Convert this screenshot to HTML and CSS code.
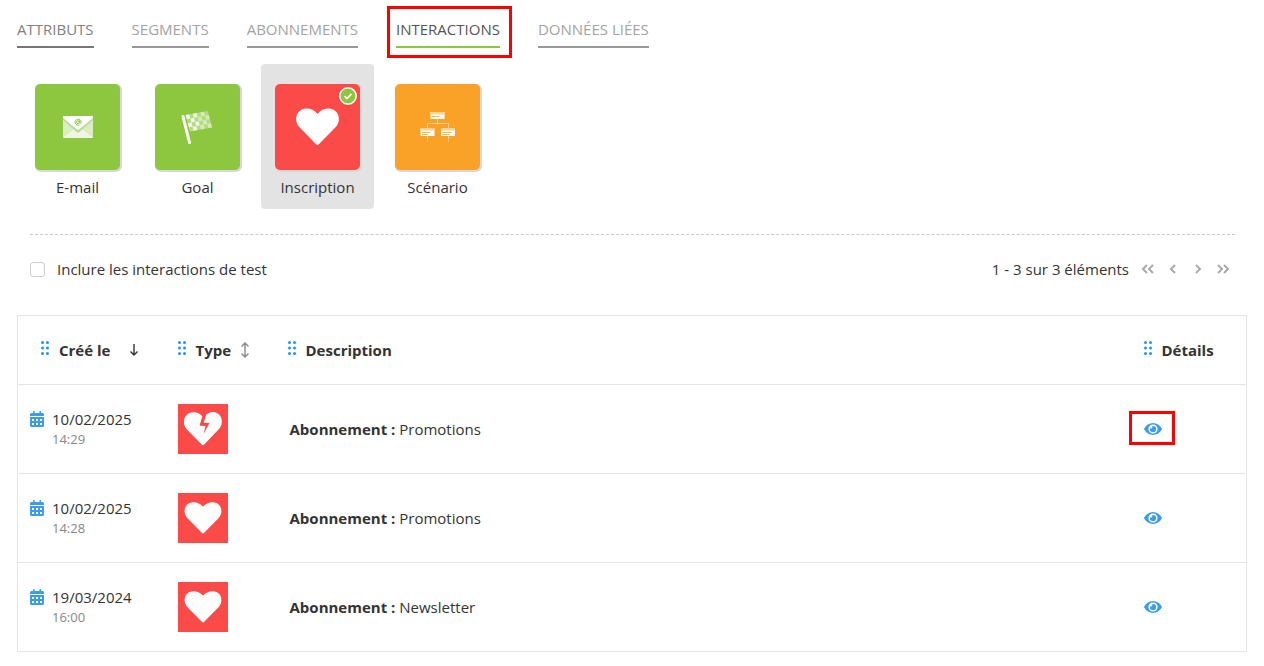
FILE: index.html
```html
<!DOCTYPE html>
<html lang="fr">
<head>
<meta charset="utf-8">
<meta name="viewport" content="width=device-width, initial-scale=1">
<title>Interactions</title>
<link rel="stylesheet" href="styles.css">
</head>
<body>
<svg class="defs" aria-hidden="true">
  <symbol id="heart" viewBox="0 0 44 38"><path d="M20.6 36.6 3.6 19.3C-1.6 13.8-.6 5.300 4.500 2 9.600-1.300 17.400-.2 22 5.600 26.600-.2 34.400-1.300 39.500 2c5.100 3.300 6.100 11.800.9 17.300l-17 17.300q-1.400 1.400-2.800 0z"/></symbol>
  <symbol id="broken" viewBox="0 0 38 34"><path d="M17.600 32.500 2.300 16.800C-2 12-.5 4.500 4.500 1.500 9-1 15 .2 18.300 4.200L15.500 13.800l6 .1-1.800 8.100 5.800-11-5.800-.2L22.300 2.600C26-.5 30.500-.8 34 1.700c5 3.500 5 10.600 1.200 15.100L20.200 32.500q-1.300 1.300-2.600 0z"/></symbol>
  <symbol id="eye" viewBox="0 0 18 12"><path fill-rule="evenodd" d="M.2 5.500C2 2.100 5.300 0 9 0s7 2.100 8.800 5.500q.3.500 0 1C16 9.900 12.700 12 9 12S2 9.900.2 6.500q-.3-.5 0-1zM9 1.400a4.600 4.600 0 1 0 0 9.200 4.600 4.600 0 0 0 0-9.200z"/><path d="M9 2.900A3.100 3.100 0 1 1 6 5.200 1.600 1.600 0 0 0 8.200 3z"/></symbol>
  <symbol id="calendar" viewBox="0 0 14 16"><path fill-rule="evenodd" d="M3 0h1.500v2h5V0H11v2h1.500Q14 2 14 3.500V5H0V3.500Q0 2 1.500 2H3zM0 6h14v8.500q0 1.500-1.500 1.500h-11Q0 16 0 14.500zm2 2v2h2V8zm4 0v2h2V8zm4 0v2h2V8zm-8 4v2h2v-2zm4 0v2h2v-2zm4 0v2h2v-2z"/></symbol>
  <symbol id="grip" viewBox="0 0 8 14"><circle cx="1.500" cy="1.500" r="1.500"/><circle cx="6.500" cy="1.500" r="1.500"/><circle cx="1.500" cy="7" r="1.500"/><circle cx="6.500" cy="7" r="1.500"/><circle cx="1.500" cy="12.500" r="1.500"/><circle cx="6.500" cy="12.500" r="1.500"/></symbol>
</svg>

<nav class="tabs">
  <a class="tab tab-dark" href="#attributs">ATTRIBUTS</a>
  <a class="tab" href="#segments">SEGMENTS</a>
  <a class="tab" href="#abonnements">ABONNEMENTS</a>
  <a class="tab tab-active" href="#interactions" aria-current="page">INTERACTIONS</a>
  <a class="tab" href="#donnees">DONNÉES LIÉES</a>
</nav>

<main>
  <div class="kinds">
    <button class="kind" type="button">
      <span class="tile green">
        <svg width="30" height="22" viewBox="0 0 30 22"><rect width="30" height="22" rx="1" fill="#dcedc2"/><path d="M0 22 11 13h8l11 9z" fill="#eff7e4"/><path d="M0 1v3l13.500 12q1.500 1.200 3 0L30 4V1z" fill="#bfd99a"/><path d="M0 1q0-1 1-1h28q1 0 1 1v1L16.500 13q-1.500 1.200-3 0L0 2z" fill="#fff"/><g fill="none" stroke="#8dc63f"><circle cx="15" cy="6.200" r="1.400"/><path d="M16.500 4.500v2.300q1.700 1.300 1.700-.8A3.100 3 0 1 0 16.600 8.900"/></g></svg>
      </span>
      <span>E-mail</span>
    </button>
    <button class="kind" type="button">
      <span class="tile green">
        <svg width="34" height="34" viewBox="0 0 34 34"><g fill="#fff" transform="matrix(3.7 -.67 1.1 4.1 4.500 5)"><path d="M0 0h6v4H0z" opacity=".35"/><path d="M0 0h1v1H0zM2 0h1v1H2zM1 1h1v1H1zM0 2h1v1H0zM2 2h1v1H2zM1 3h1v1H1z" opacity=".8"/><path d="M4 0h1v1H4zM3 1h1v1H3zM5 1h1v1H5zM4 2h1v1H4zM3 3h1v1H3zM5 3h1v1H5z" opacity=".45"/></g><path d="m2 6.500 6.500 26" stroke="#fff" stroke-width="3" stroke-linecap="round"/></svg>
      </span>
      <span>Goal</span>
    </button>
    <button class="kind kind-selected" type="button" aria-pressed="true">
      <span class="tile red">
        <svg class="heart" width="43" height="38"><use href="#heart"/></svg>
        <svg class="check" width="18" height="18" viewBox="0 0 18 18"><circle cx="9" cy="9" r="8.200" fill="#8dc63f" stroke="#fff" stroke-width="1.500"/><path d="m5.500 9.200 2.400 2.400 4.600-4.700" fill="none" stroke="#fff" stroke-width="1.700"/></svg>
      </span>
      <span>Inscription</span>
    </button>
    <button class="kind" type="button">
      <span class="tile orange">
        <svg width="36" height="32" viewBox="0 0 36 32"><g fill="none" stroke="#fff" opacity=".5"><path d="M17.500 8v6M7.500 17v-4.500h21V17"/><path d="M7.500 25v6M28.500 25v6" stroke-dasharray="3 1"/></g><g fill="#fff"><path d="M10.500 1h14v7h-14zM.5 17h14v8H.5zM21 17h14v8H21z"/></g><g fill="#fcd194"><path d="M10.500 1h14v2.500h-14zM.5 17h14v2.500H.5zM21 17h14v2.500H21z"/></g><path d="M12 5.500h7M2 21.500h8M2 23.500h6M22.500 21.500h9M22.500 23.500h7" stroke="#edc12b"/></svg>
      </span>
      <span>Scénario</span>
    </button>
  </div>

  <div class="toolbar">
    <label class="include"><input type="checkbox" class="box">Inclure les interactions de test</label>
    <div class="pager">
      <span>1 - 3 sur 3 éléments</span>
      <div class="pager-buttons">
        <button type="button" aria-label="Première page"><svg width="14" height="12" viewBox="0 0 14 12"><path d="M6 2 2 6l4 4M12 2 8 6l4 4"/></svg></button>
        <button type="button" aria-label="Page précédente"><svg width="14" height="12" viewBox="0 0 14 12"><path d="M9 2 5 6l4 4"/></svg></button>
        <button type="button" aria-label="Page suivante"><svg width="14" height="12" viewBox="0 0 14 12"><path d="m5 2 4 4-4 4"/></svg></button>
        <button type="button" aria-label="Dernière page"><svg width="14" height="12" viewBox="0 0 14 12"><path d="m2 2 4 4-4 4M8 2l4 4-4 4"/></svg></button>
      </div>
    </div>
  </div>

  <table class="list">
    <colgroup><col class="col-date"><col class="col-type"><col><col class="col-details"></colgroup>
    <thead>
      <tr>
        <th scope="col" class="first"><span class="head"><svg class="grip" width="8" height="14"><use href="#grip"/></svg>Créé le<svg class="sort-down" width="8" height="12" viewBox="0 0 8 12"><path d="M4 0v11M.5 7.500 4 11l3.500-3.500"/></svg></span></th>
        <th scope="col"><span class="head"><svg class="grip" width="8" height="14"><use href="#grip"/></svg>Type<svg class="sort-both" width="8" height="16" viewBox="0 0 8 16"><path d="M4 1v14M.5 4.500 4 1l3.500 3.500M.5 11.500 4 15l3.500-3.500"/></svg></span></th>
        <th scope="col"><span class="head"><svg class="grip" width="8" height="14"><use href="#grip"/></svg>Description</span></th>
        <th scope="col"><span class="head"><svg class="grip" width="8" height="14"><use href="#grip"/></svg>Détails</span></th>
      </tr>
    </thead>
    <tbody>
      <tr>
        <td><div class="when"><svg class="blue" width="14" height="16"><use href="#calendar"/></svg><div>10/02/2025<small>14:29</small></div></div></td>
        <td><span class="badge"><svg width="38" height="34"><use href="#broken"/></svg></span></td>
        <td class="desc"><b>Abonnement :</b> Promotions</td>
        <td><button type="button" class="view marked" aria-label="Voir les détails"><svg width="18" height="12"><use href="#eye"/></svg></button></td>
      </tr>
      <tr>
        <td><div class="when"><svg class="blue" width="14" height="16"><use href="#calendar"/></svg><div>10/02/2025<small>14:28</small></div></div></td>
        <td><span class="badge"><svg width="38" height="32"><use href="#heart"/></svg></span></td>
        <td class="desc"><b>Abonnement :</b> Promotions</td>
        <td><button type="button" class="view" aria-label="Voir les détails"><svg width="18" height="12"><use href="#eye"/></svg></button></td>
      </tr>
      <tr>
        <td><div class="when"><svg class="blue" width="14" height="16"><use href="#calendar"/></svg><div>19/03/2024<small>16:00</small></div></div></td>
        <td><span class="badge"><svg width="38" height="32"><use href="#heart"/></svg></span></td>
        <td class="desc"><b>Abonnement :</b> Newsletter</td>
        <td><button type="button" class="view" aria-label="Voir les détails"><svg width="18" height="12"><use href="#eye"/></svg></button></td>
      </tr>
    </tbody>
  </table>
</main>
</body>
</html>
```

FILE: styles.css
```css
* { box-sizing: border-box; }

body {
  margin: 0;
  padding: 18px 17px 14px;
  background: #fff;
  color: #333;
  font: 15px/22px "Open Sans", sans-serif;
}

button {
  padding: 0;
  border: 0;
  background: none;
  color: inherit;
  font: inherit;
  cursor: pointer;
}

svg { display: block; flex: none; }
.defs { position: absolute; width: 0; height: 0; }

/* Tabs */
.tabs { display: flex; gap: 38px; }

.tab {
  position: relative;
  padding-bottom: 6px;
  border-bottom: 2px solid #999;
  color: #a3a3a3;
  text-decoration: none;
  white-space: nowrap;
}

.tab-dark { border-color: #777; color: #808080; }
.tab-active { border-color: #8dc63f; color: #555; }

.tab-active::after {
  content: "";
  position: absolute;
  inset: -12px -12px -12px -9px;
  border: 3px solid #f00;
}

/* Interaction kinds */
.kinds {
  display: flex;
  gap: 7px;
  margin: 16px 12px 0 4px;
  padding-bottom: 25px;
}

.kind {
  display: flex;
  flex-direction: column;
  align-items: center;
  gap: 6px;
  width: 113px;
  padding: 20px 0 11px;
  border-radius: 4px;
}

.kind-selected { background: #e3e3e3; }

.tile {
  position: relative;
  display: grid;
  place-items: center;
  width: 85px;
  height: 86px;
  border-radius: 5px;
  box-shadow: 1px 1px 0 1px #d8d8d8;
}

.green { background: #8dc63f; }
.red { background: #fb4b48; }
.orange { background: #faa127; }
.heart { fill: #fff; }
.check { position: absolute; top: 3px; right: 3px; }

/* Filter and pager */
.toolbar {
  display: flex;
  justify-content: space-between;
  align-items: center;
  margin: 0 12px 0 13px;
  padding: 23px 5px 35px 0;
  border-top: 1px dashed #c9c9c9;
}

.include { display: flex; align-items: center; gap: 12px; }

.box {
  appearance: none;
  width: 15px;
  height: 15px;
  margin: 0;
  border: 1px solid #ccc;
  border-radius: 3px;
  background: #fff;
}

.box:checked { background: #8dc63f; }
.pager { display: flex; align-items: center; gap: 12px; }
.pager-buttons { display: flex; gap: 11px; }
.pager-buttons path { fill: none; stroke: #aaa; stroke-width: 2; }

/* List */
.list {
  width: 100%;
  border: 1px solid #e5e5e5;
  border-collapse: collapse;
  table-layout: fixed;
}

.col-date { width: 150px; }
.col-type { width: 110px; }
.col-details { width: 113px; }
th { height: 69px; padding: 0 0 0 10px; }
th.first { padding-left: 23px; }
td { height: 89px; padding: 0 0 0 10px; border-top: 1px solid #e5e5e5; }
td:first-child { padding-left: 12px; }
td.desc { padding-left: 12px; }
.head { display: flex; align-items: center; gap: 10px; }
.grip { margin-bottom: 4px; fill: #1e96f0; }
.sort-down, .sort-both { fill: none; stroke: #333; stroke-width: 1.4; }
.sort-down { margin-left: 10px; }
.sort-both { stroke: #888; }
.when { display: flex; gap: 8px; line-height: 20px; }
.when svg { margin-top: 2px; }
.when small { display: block; color: #888; font-size: 13px; }
.blue { fill: #3b9de9; }

.badge {
  display: grid;
  place-items: center;
  width: 50px;
  height: 50px;
  background: #fb4b48;
  fill: #fff;
}

.view { position: relative; display: block; fill: #3b9de9; }

.marked::after {
  content: "";
  position: absolute;
  inset: -12px -13px -10px -15px;
  border: 3px solid #f00;
}
```
